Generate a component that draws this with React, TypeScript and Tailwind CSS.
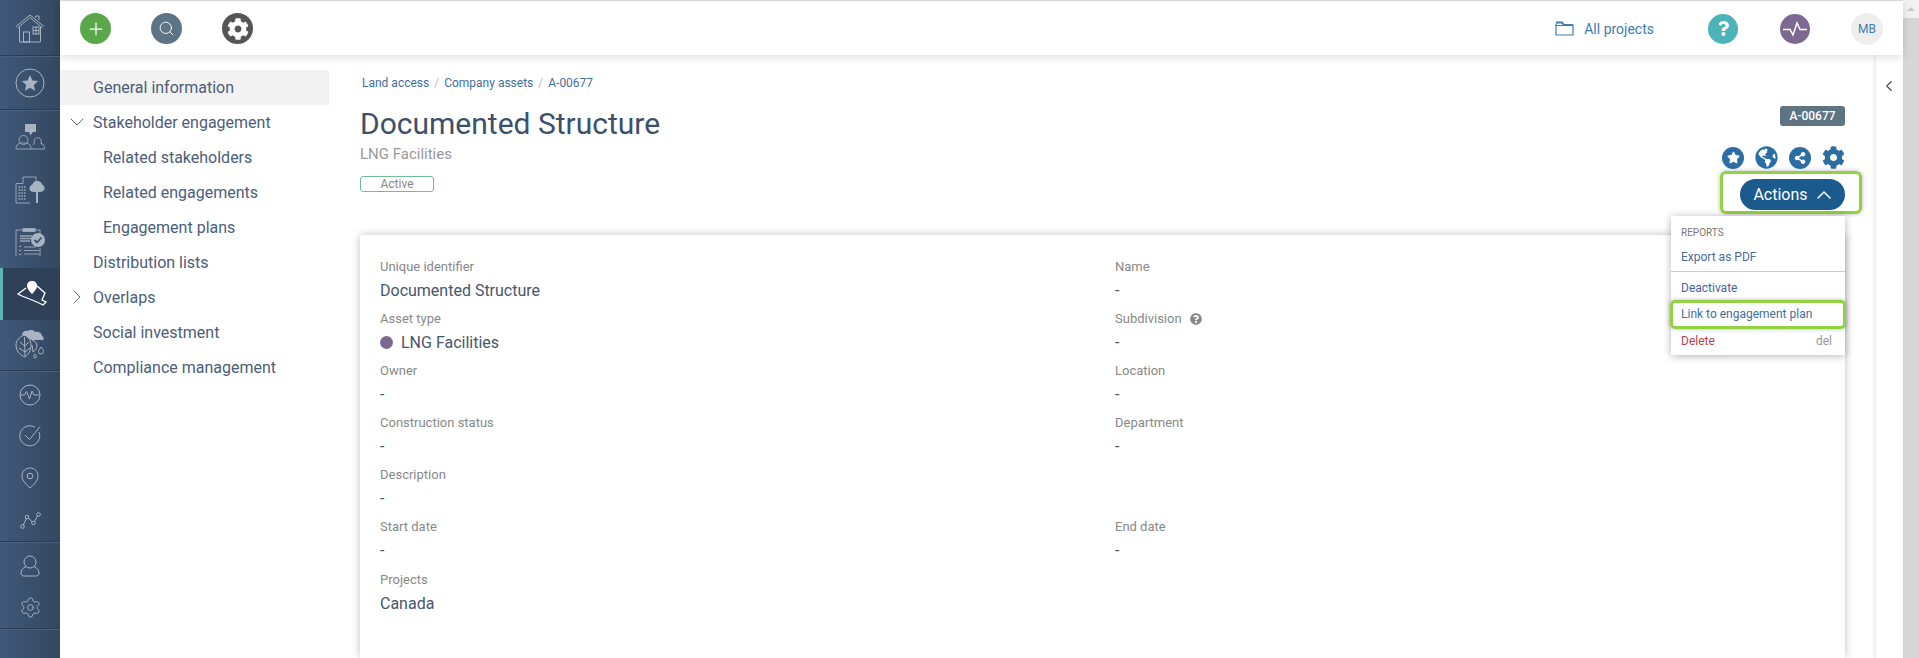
import { ChevronDown, ChevronLeft, ChevronRight, ChevronUp, Plus, Search, Settings } from "lucide-react"
import { FaCog, FaGlobeAmericas, FaQuestion, FaQuestionCircle, FaShareAlt, FaStar } from "react-icons/fa"

const nav = [
  { label: "General information", active: true },
  { label: "Stakeholder engagement", chevron: "down" },
  { label: "Related stakeholders", sub: true },
  { label: "Related engagements", sub: true },
  { label: "Engagement plans", sub: true },
  { label: "Distribution lists" },
  { label: "Overlaps", chevron: "right" },
  { label: "Social investment" },
  { label: "Compliance management" },
]

const fields = [
  [{ label: "Unique identifier", value: "Documented Structure" }, { label: "Name", value: "-" }],
  [{ label: "Asset type", value: "LNG Facilities", dot: true }, { label: "Subdivision", value: "-", help: true }],
  [{ label: "Owner", value: "-" }, { label: "Location", value: "-" }],
  [{ label: "Construction status", value: "-" }, { label: "Department", value: "-" }],
  [{ label: "Description", value: "-" }, null],
  [{ label: "Start date", value: "-" }, { label: "End date", value: "-" }],
  [{ label: "Projects", value: "Canada" }, null],
]

const HomeIcon = () => (
  <svg width="30" height="30" viewBox="0 0 30 30" fill="none" stroke="#a9b4c3" strokeWidth="1">
    <path d="M1 13.500 15 2l14 11.500M2.500 15 15 4.500 27.500 15M4.500 14v15h21V14M24 7V3h-3.500v1.500" />
    <rect x="8.500" y="19" width="6" height="10" />
    <rect x="18" y="14" width="6" height="7" />
    <path d="M21 14v7M18 17.500h6" />
  </svg>
)

const StarIcon = () => (
  <svg width="30" height="30" viewBox="0 0 30 30">
    <circle cx="15" cy="15" r="14" fill="none" stroke="#a9b4c3" strokeWidth="1" />
    <path d="m15 7 2.400 5.400 5.800.6-4.400 3.900 1.300 5.800L15 19.700l-5.100 3 1.300-5.800L6.800 13l5.800-.6z" fill="#a9b4c3" />
  </svg>
)

const PeopleIcon = () => (
  <svg width="30" height="26" viewBox="0 0 30 26" fill="none" stroke="#97a4b6" strokeWidth="1">
    <path d="M10 0h11v8h-3l-2.500 3.500L14 8h-4z" fill="#a9b4c3" stroke="none" />
    <circle cx="8.500" cy="16" r="4.500" />
    <path d="M1 25c0-5 3-6 7.500-6s7.500 1 7.500 6zM16 25h13.500c0-4-2-5.500-4-6" />
    <path d="M18 21c1.500-1 1-3 1.500-5 .5-3 6-3 6.500 0 .5 2 0 4 1.500 5" />
  </svg>
)

const AssetIcon = () => (
  <svg width="30" height="28" viewBox="0 0 30 28" fill="none" stroke="#97a4b6" strokeWidth="1">
    <path d="M1 7.500h7V1h13v6M1 7.500V27h14" />
    <path d="M3.500 11h8M3.500 14h8M3.500 17h8M3.500 20h8M3.500 23h8" strokeWidth="1.700" strokeDasharray="1.700 1" />
    <path d="M22 5c3 0 4.500 1.500 5 3.500 2 1 3 2.500 2.500 4.500-.5 2-2.500 3-5 3H23v11h-2V16h-2c-3 0-4.500-1.500-4.500-3.500 0-2 1.500-3.500 3-4C18 6.500 19.500 5 22 5z" fill="#a9b4c3" stroke="none" />
  </svg>
)

const ClipboardIcon = () => (
  <svg width="30" height="28" viewBox="0 0 30 28" fill="none" stroke="#97a4b6" strokeWidth="1">
    <path d="M8 2H1v26M20 2h5v4M25 20v8" />
    <rect x="8" y="0.500" width="12" height="3" fill="#a9b4c3" />
    <path d="M5 8h12M5 10.500h12M5 13h10" strokeWidth="1.500" />
    <path d="m4 18 1 1 1.500-1.500M4 22l1 1 1.500-1.500M4 26l1 1 1.500-1.500M9 19h12M9 22.500h15M9 26h15" />
    <circle cx="23" cy="12" r="7" fill="#a9b4c3" stroke="none" />
    <path d="m19.500 12 2.500 2.500 4.500-5" stroke="#3a506c" strokeWidth="1.800" />
  </svg>
)

const MapPinIcon = () => (
  <svg width="30" height="26" viewBox="0 0 30 26" fill="none" stroke="#fff" strokeWidth="1.300">
    <path d="M9 7 1 13l4 2 5 2 5 2 7 3 4 2 3-3-4-2 3-7-8-7" />
    <path d="M15 0c3 0 5 2 5 4.800 0 3-3 6.200-5 8.200-2-2-5-5.200-5-8.200C10 2 12 0 15 0z" fill="#fff" stroke="none" />
  </svg>
)

const LeafIcon = () => (
  <svg width="30" height="30" viewBox="0 0 30 30" fill="none" stroke="#a9b4c3" strokeWidth="1">
    <path d="M9 5c4 1 7 5 7 10 0 6-3 10-6 12-5-2-9-6-9-12 0-4 3-8 8-10zM9.500 7l.5 19M5 12l4.500 4M14 12l-4.500 4M4 18l6 4M15 18l-5 4" />
    <path d="M7 5c0-3 3-5 6-4 2-2 6-1 7 1 3-1 7 1 7 4 2 1 2 3 1 4H18c-3 0-5-2-7-4z" fill="#a9b4c3" stroke="none" />
    <path d="M17 10c3 1 5 3 5 6 0 2-2 5-4 6l-1-7" />
    <path d="M26 17c1.500 2 2.500 3 2.500 4.500a2.500 2.500 0 0 1-5 0c0-1.500 1-2.500 2.500-4.500zM20 24c1 1.200 1.300 2 1.300 2.700a1.300 1.300 0 0 1-2.600 0c0-.7.300-1.500 1.300-2.700z" />
  </svg>
)

const PulseCircle = () => (
  <svg width="22" height="22" viewBox="0 0 22 22" fill="none" stroke="#a9b4c3" strokeWidth="1">
    <circle cx="11" cy="11" r="10" />
    <path d="M1.500 11h4l2-3.500 3 7.500 2.500-8 2 4h5" />
  </svg>
)

const CheckCircle = () => (
  <svg width="22" height="22" viewBox="0 0 22 22" fill="none" stroke="#a9b4c3" strokeWidth="1">
    <path d="M20 7a10 10 0 1 1-4-4.700" />
    <path d="m6 10 4.500 4.500L21 1.500" />
  </svg>
)

const PinIcon = () => (
  <svg width="18" height="22" viewBox="0 0 18 22" fill="none" stroke="#a9b4c3" strokeWidth="1">
    <path d="M9 1c4.500 0 8 3.200 8 7.800 0 5-5 9.700-8 12.200-3-2.500-8-7.200-8-12.200C1 4.200 4.500 1 9 1z" />
    <circle cx="9" cy="9" r="2.800" />
  </svg>
)

const TrendIcon = () => (
  <svg width="21" height="17" viewBox="0 0 21 17" fill="none" stroke="#a9b4c3" strokeWidth="1">
    <circle cx="2.500" cy="14.500" r="1.800" />
    <circle cx="7" cy="5" r="1.800" />
    <circle cx="13.500" cy="11" r="1.800" />
    <circle cx="18.500" cy="2.500" r="1.800" />
    <path d="m3.300 13 3-6.400M8.300 6.300l3.900 3.400M14.500 9.500l3-5.500" />
  </svg>
)

const UserIcon = () => (
  <svg width="20" height="22" viewBox="0 0 20 22" fill="none" stroke="#a9b4c3" strokeWidth="1">
    <circle cx="10" cy="7" r="6" />
    <path d="M6 11.500C3 13 1 15 1 18c0 2 1 3 3 3h12c2 0 3-1 3-3 0-3-2-5-5-6.500" />
  </svg>
)

const FolderIcon = () => (
  <svg width="19" height="15" viewBox="0 0 19 15" fill="none" stroke="#3f7cb0" strokeWidth="1.200">
    <path d="M1 2.500V14h17V4.500H1" />
    <path d="M1 1.500h6l2 2.500h9" strokeWidth="2" />
  </svg>
)

const Divider = () => <div className="h-[2px] shrink-0 bg-[#2a3c52] border-b border-[#4a6080]" />

const Sidebar = () => (
  <aside className="w-[60px] h-full shrink-0 flex flex-col bg-gradient-to-r from-[#40597a] to-[#33475f]">
    <div className="h-[55px] flex items-center justify-center"><HomeIcon /></div>
    <Divider />
    <div className="h-[52px] flex items-center justify-center"><StarIcon /></div>
    <Divider />
    <div className="h-[52px] flex items-center justify-center"><PeopleIcon /></div>
    <div className="h-[53px] flex items-center justify-center"><AssetIcon /></div>
    <div className="h-[52px] flex items-center justify-center"><ClipboardIcon /></div>
    <div className="h-[52px] flex items-center justify-center bg-[#2f4158] border-l-[3px] border-[#5fb3b5]"><MapPinIcon /></div>
    <div className="h-[50px] flex items-center justify-center"><LeafIcon /></div>
    <Divider />
    <div className="h-[41px] mt-[2px] flex items-center justify-center"><PulseCircle /></div>
    <div className="h-[42px] flex items-center justify-center"><CheckCircle /></div>
    <div className="h-[42px] flex items-center justify-center"><PinIcon /></div>
    <div className="h-[42px] flex items-center justify-center"><TrendIcon /></div>
    <Divider />
    <div className="h-[42px] mt-[2px] flex items-center justify-center"><UserIcon /></div>
    <div className="h-[41px] flex items-center justify-center">
      <Settings size={23} strokeWidth={1} color="#a9b4c3" />
    </div>
    <Divider />
  </aside>
)

const TopBar = () => (
  <header className="relative z-10 h-[53px] mt-px shrink-0 flex items-center justify-between bg-white shadow-[0_2px_8px_rgba(0,0,0,0.14)]">
    <div className="flex items-center gap-10 pl-5">
      <div className="w-[31px] h-[31px] rounded-full bg-[#5aa64a] flex items-center justify-center">
        <Plus size={20} color="#fff" strokeWidth={1.5} />
      </div>
      <div className="w-[31px] h-[31px] rounded-full bg-[#5c7485] flex items-center justify-center">
        <Search size={17} color="#fff" strokeWidth={1.3} />
      </div>
      <div className="w-[31px] h-[31px] rounded-full bg-[#555555] flex items-center justify-center">
        <FaCog size={22} color="#fff" />
      </div>
    </div>
    <div className="flex items-center pr-5">
      <FolderIcon />
      <span className="ml-[10px] text-sm text-[#3f7cb0]">All projects</span>
      <div className="ml-[54px] w-[30px] h-[30px] rounded-full bg-[#4db3b8] flex items-center justify-center">
        <FaQuestion size={15} color="#fff" />
      </div>
      <div className="ml-[42px] w-[30px] h-[30px] rounded-full bg-[#7d6891] flex items-center justify-center">
        <svg width="26" height="16" viewBox="0 0 26 16" fill="none" stroke="#fff" strokeWidth="1.500">
          <path d="M1 8.500h7l3 5.500 4-12 3 6.500h7" />
        </svg>
      </div>
      <div className="ml-[41px] w-[32px] h-[32px] rounded-full bg-[#eeeeee] flex items-center justify-center text-xs text-[#3f7cb0]">
        MB
      </div>
    </div>
  </header>
)

const SubNav = () => (
  <nav className="w-[269px] shrink-0 pt-[15px] text-base text-[#4c5d78]">
    {nav.map((item) => (
      <div
        key={item.label}
        className={`relative h-[35px] flex items-center ${item.sub ? "pl-[43px]" : "pl-[33px]"} ${item.active ? "bg-[#f2f2f2]" : ""}`}
      >
        {item.chevron === "down" && (
          <ChevronDown size={24} strokeWidth={1} color="#666" className="absolute left-[5px] top-[5px]" />
        )}
        {item.chevron === "right" && (
          <ChevronRight size={24} strokeWidth={1} color="#666" className="absolute left-[5px] top-[5px]" />
        )}
        {item.label}
      </div>
    ))}
  </nav>
)

const ActionsMenu = () => (
  <div className="absolute z-20 top-[161px] right-[30px] w-[174px] h-[139px] bg-white shadow-[0_1px_8px_rgba(0,0,0,0.3)] text-xs">
    <div className="pl-[10px] pt-[10px] text-[10px] leading-[14px] text-[#777777]">REPORTS</div>
    <div className="pl-[10px] h-[31px] leading-[34px] text-[#4a6a9c]">Export as PDF</div>
    <div className="h-px bg-[#cccccc]" />
    <div className="pl-[10px] h-[29px] leading-[32px] text-[#4a5f9c]">Deactivate</div>
    <div className="relative pl-[10px] h-[27px] leading-[27px] text-[#3f6ea0]">
      Link to engagement plan
      <div className="absolute -inset-x-px -inset-y-px rounded-[5px] border-[3px] border-[#92d044] shadow-[0_0_4px_rgba(0,0,0,0.3)]" />
    </div>
    <div className="flex justify-between pl-[10px] pr-[13px] h-[27px] leading-[26px]">
      <span className="text-[#c04050]">Delete</span>
      <span className="text-[#999999]">del</span>
    </div>
  </div>
)

const Header = () => (
  <div className="flex justify-between h-[180px] shrink-0">
    <div className="pt-[20px]">
      <div className="flex items-center gap-[5px] text-xs leading-4 text-[#3f6ea0] pl-[2px]">
        <span>Land access</span>
        <span className="text-[#bbbbbb]">/</span>
        <span>Company assets</span>
        <span className="text-[#bbbbbb]">/</span>
        <span>A-00677</span>
      </div>
      <h1 className="mt-[15px] text-[30px] leading-[36px] text-[#3c4f6b]">Documented Structure</h1>
      <div className="mt-[2px] text-[15px] leading-5 text-[#999999]">LNG Facilities</div>
      <div className="mt-[12px] w-[74px] h-[16px] rounded-[3px] border border-[#6dbf97] flex items-center justify-center text-xs text-[#888888]">
        Active
      </div>
    </div>
    <div className="flex flex-col items-end pt-[51px]">
      <div className="h-5 w-[65px] rounded-[3px] bg-[#5f7482] text-white text-xs font-medium flex items-center justify-center">
        A-00677
      </div>
      <div className="mt-[20px] flex items-center gap-[11px] text-[#2c6ea3]">
        <div className="w-[22px] h-[22px] rounded-full bg-[#2c6ea3] flex items-center justify-center">
          <FaStar size={13} color="#fff" />
        </div>
        <FaGlobeAmericas size={23} />
        <div className="w-[22px] h-[22px] rounded-full bg-[#2c6ea3] flex items-center justify-center">
          <FaShareAlt size={12} color="#fff" />
        </div>
        <FaCog size={23} />
      </div>
      <div className="relative mt-[10px]">
        <div className="w-[105px] h-[31px] rounded-full bg-[#1b5a8c] text-white text-base flex items-center justify-center gap-[4px] pl-[4px]">
          Actions
          <ChevronUp size={24} strokeWidth={1.5} />
        </div>
        <div className="absolute -left-[20px] -right-[17px] -top-[8px] -bottom-[4px] rounded-[6px] border-[3px] border-[#92d044] shadow-[0_0_4px_rgba(0,0,0,0.3)]" />
      </div>
    </div>
  </div>
)

const Card = () => (
  <section className="flex-1 bg-white shadow-[0_0_8px_rgba(0,0,0,0.25)] rounded-t-[2px] pt-[23.5px] pl-[20px]">
    {fields.map((row, i) => (
      <div key={i} className="h-[52.2px] flex">
        {row.map((f, j) => (
          <div key={j} className={j === 0 ? "w-[735px]" : ""}>
            {f && (
              <>
                <div className="flex items-center gap-2 text-[13px] leading-4 text-[#888888]">
                  {f.label}
                  {f.help && <FaQuestionCircle size={12} color="#888" />}
                </div>
                <div className="mt-[4px] flex items-center gap-[8px] text-base leading-[24px] text-[#47566b]">
                  {f.dot && <span className="w-[13px] h-[13px] rounded-full bg-[#7d6891]" />}
                  {f.value}
                </div>
              </>
            )}
          </div>
        ))}
      </div>
    ))}
  </section>
)

const App = () => {
  return (
    <div className="h-[658px] w-full flex overflow-hidden bg-white font-['Roboto',sans-serif]">
      <Sidebar />
      <div className="flex-1 min-w-0 flex flex-col border-t border-[#e0e0e0]">
        <TopBar />
        <div className="flex-1 min-h-0 flex">
          <SubNav />
          <main className="relative flex-1 min-w-0 flex flex-col pl-[31px] pr-[30px]">
            <Header />
            <Card />
            <ActionsMenu />
          </main>
          <div className="w-[28px] shrink-0 border-l border-[#eeeeee] shadow-[-1px_0_3px_rgba(0,0,0,0.08)] pt-[22px] pl-[4px]">
            <ChevronLeft size={18} color="#3c4f6b" strokeWidth={1.5} />
          </div>
        </div>
      </div>
      <div className="w-[16px] shrink-0 flex flex-col bg-[#f1f1f1]">
        <div className="h-[18px] flex items-center justify-center">
          <div className="w-0 h-0 border-x-[4px] border-x-transparent border-b-[4px] border-b-[#c8c8c8]" />
        </div>
        <div className="flex-1 bg-[#d6d6d6]" />
      </div>
    </div>
  )
}

export default App
